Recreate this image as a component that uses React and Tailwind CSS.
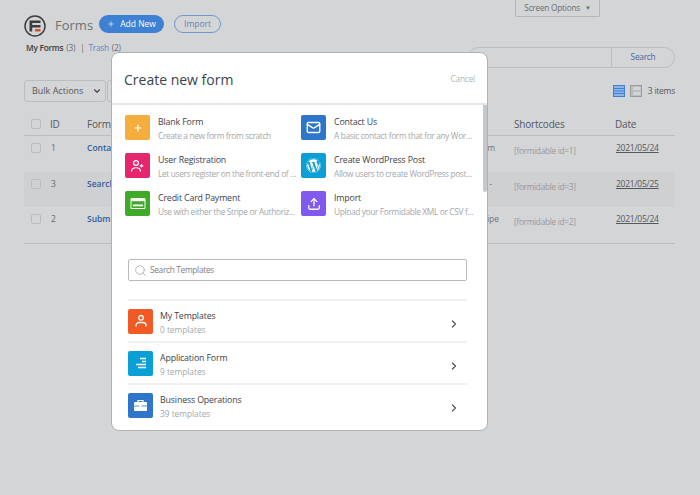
import React from "react";
import { Plus, Mail, Upload, ChevronRight, Search, ChevronDown } from "lucide-react";
import { FaWordpress } from "react-icons/fa";

const font = { fontFamily: '"Open Sans", "Noto Sans", sans-serif' };

function Tile({ bg, children }) {
  return <div className={`w-[25px] h-[25px] ${bg} rounded-[2px] flex items-center justify-center shrink-0 text-white`}>{children}</div>;
}

function Card({ bg, icon, title, desc }) {
  return (
    <div className="flex gap-2 items-start h-[25px] min-w-0">
      <Tile bg={bg}>{icon}</Tile>
      <div className="min-w-0 flex-1 pt-[1px]">
        <div className="text-[8.8px] tracking-[-0.15px] leading-[13px] text-[#3c434a] whitespace-nowrap">{title}</div>
        <div className="text-[8.3px] tracking-[-0.33px] leading-[13px] text-[#a4a7aa] truncate">{desc}</div>
      </div>
    </div>
  );
}

function Row({ bg, icon, title, sub }) {
  return (
    <div className="h-[42px] border-t-2 border-[#f0f0f1] flex items-center">
      <Tile bg={bg}>{icon}</Tile>
      <div className="ml-[7px] flex-1 pt-[4px]">
        <div className="text-[8.8px] tracking-[-0.15px] leading-[13px] text-[#3c434a]">{title}</div>
        <div className="text-[8.3px] leading-[13px] text-[#a4a7aa]">{sub}</div>
      </div>
      <ChevronRight size={12} strokeWidth={2.6} className="text-[#50575e] mr-[7px] mt-[5px]" />
    </div>
  );
}

function TableRow({ id, name, tail, tailPad, code, date, shaded }) {
  return (
    <div className={`h-[35.5px] flex text-[8.5px] ${shaded ? "bg-[#cfd0d2]" : ""}`}>
      <div className="w-[26px] pl-[7px] pt-[7px]"><div className="w-[10px] h-[10px] border border-[#bcbdbf] rounded-[2px]" /></div>
      <div className="w-[37px] pl-[1px] pt-[6px] text-[#686b6e]">{id}</div>
      <div className={`w-[427px] pt-[6px] ${tailPad} text-[#2f5d9e] font-semibold flex justify-between`}>
        <span>{name}</span><span className="font-normal text-[#6f7275]">{tail}</span>
      </div>
      <div className="w-[101px] pt-[9px] text-[8.3px] tracking-[-0.3px] text-[#97999c]">{code}</div>
      <div className="pt-[6px] pl-[1px] text-[8.5px] tracking-[-0.25px] text-[#55585c] underline">{date}</div>
    </div>
  );
}

export default function App() {
  return (
    <div style={font} className="relative w-[700px] h-[495px] overflow-hidden bg-[#d4d5d7]">
      <div className="pl-[24px] pr-[25px] h-full flex flex-col">
        <div className="flex justify-end pr-[75px]">
          <div className="w-[85px] h-[17px] border border-t-0 border-[#b5b6b8] rounded-b-[2px] text-[8.3px] tracking-[-0.25px] text-[#6b6e72] flex items-center justify-center gap-[5px]">
            Screen Options <span className="text-[6px]">▼</span>
          </div>
        </div>
        <div className="flex items-center h-[21px] -mt-[2px]">
          <svg width="22" height="22" viewBox="0 0 22 22" className="shrink-0">
            <circle cx="11" cy="11" r="10" fill="none" stroke="#3a3d42" strokeWidth="1.5" />
            <path d="M5.5 5.5h11v2.6H8.2v1.9h8.3v2.4H8.2v4.1H5.5z" fill="#3a3d42" />
            <rect x="11" y="14" width="5.5" height="2.5" fill="#d9502a" />
          </svg>
          <span className="ml-[9px] text-[13px] text-[#6d7074]">Forms</span>
          <div className="ml-[6px] -mt-[3px] w-[65px] h-[18px] rounded-full bg-[#3d80d4] text-white text-[8.5px] flex items-center justify-center gap-[5px]">
            <Plus size={8} strokeWidth={1.8} /> Add New
          </div>
          <div className="ml-[10px] -mt-[3px] w-[47px] h-[18px] rounded-full border border-[#6d98cf] text-[#6087b8] text-[8.5px] flex items-center justify-center">Import</div>
        </div>
        <div className="flex justify-between mt-[5px] h-[27px]">
          <div className="pl-[2px] text-[8.3px] tracking-[-0.25px] text-[#6b6e72] leading-[13px] whitespace-nowrap flex">
            <b className="text-[#3a3d42] font-semibold">My Forms</b>
            <span className="ml-[3px]">(3)</span>
            <span className="ml-[5px]">|</span>
            <span className="ml-[4px] text-[#5a85c0]">Trash</span>
            <span className="ml-[3px]">(2)</span>
          </div>
          <div className="w-[207px] h-[21px] mt-[6px] border border-[#bcbdbf] rounded-full flex justify-end">
            <div className="w-[63px] border-l border-[#bcbdbf] text-[8.3px] tracking-[-0.25px] text-[#46699b] flex items-center justify-center">Search</div>
          </div>
        </div>
        <div className="flex justify-between items-center mt-[12px] h-[22px]">
          <div className="flex gap-[1px]">
            <div className="w-[82px] h-[22px] border border-[#bcbdbf] rounded-[3px] text-[9px] text-[#55585c] flex items-center justify-between pl-[7px] pr-[3px]">
              Bulk Actions <ChevronDown size={10} strokeWidth={2.6} className="text-[#3c434a]" />
            </div>
            <div className="w-[20px] h-[22px] border border-[#bcbdbf] rounded-[3px]" />
          </div>
          <div className="flex items-center text-[8.5px] tracking-[-0.25px] text-[#55585c]">
            <svg width="12" height="12" viewBox="0 0 12 12" className="mr-[5px]">
              <rect x=".5" y=".5" width="11" height="11" fill="#8fb4e5" stroke="#3d80d4" />
              <path d="M0 3.5h12M0 6h12M0 8.5h12" stroke="#3d80d4" />
            </svg>
            <svg width="12" height="12" viewBox="0 0 12 12" className="mr-[6px]">
              <rect x=".5" y=".5" width="11" height="11" fill="#bcbdbf" stroke="#9a9b9e" />
              <rect x="3.5" y="2" width="7" height="3" fill="#d4d5d7" /><rect x="3.5" y="7" width="7" height="3" fill="#d4d5d7" />
            </svg>
            3 items
          </div>
        </div>
        <div className="flex mt-[15px] h-[19px] border-b border-[#bcbdbf] text-[10px] leading-[14px] tracking-[-0.2px] text-[#55585c] w-[651px]">
          <div className="w-[26px] pl-[7px] pt-[2px]"><div className="w-[10px] h-[10px] border border-[#bcbdbf] rounded-[2px]" /></div>
          <div className="w-[37px]">ID</div>
          <div className="w-[427px]">Form</div>
          <div className="w-[101px]">Shortcodes</div>
          <div>Date</div>
        </div>
        <div className="border-b border-[#bcbdbf] w-[651px]">
          <TableRow id="1" name="Contact Us" tail="rm" tailPad="pr-[19px]" code="[formidable id=1]" date="2021/05/24" />
          <TableRow id="3" name="Search" tail="-" tailPad="pr-[22px]" code="[formidable id=3]" date="2021/05/25" shaded />
          <TableRow id="2" name="Submit" tail="ipe" tailPad="pr-[15px]" code="[formidable id=2]" date="2021/05/24" />
        </div>
      </div>

      <div className="absolute left-[111px] top-[52px] w-[377px] h-[379px] bg-white rounded-[8px] border border-[#b0b1b3] overflow-hidden flex flex-col">
        <div className="h-[52px] shrink-0 border-b-2 border-[#e6e6e7] flex items-center justify-between pl-[12px] pr-[12px] pt-[2px]">
          <span className="text-[14px] text-[#3c434a]">Create new form</span>
          <span className="text-[8.3px] tracking-[-0.2px] text-[#b4b6b8]">Cancel</span>
        </div>
        <div className="relative h-[154px] shrink-0 pl-[13px] pt-[10px]">
          <div className="grid grid-cols-[172px_174px] gap-x-[4px] gap-y-[13px]">
            <Card bg="bg-[#f5ae3d]" icon={<Plus size={10} strokeWidth={2.6} />} title="Blank Form" desc="Create a new form from scratch" />
            <Card bg="bg-[#2f75c9]" icon={<Mail size={15} strokeWidth={2.2} />} title="Contact Us" desc="A basic contact form that for any WordPress site" />
            <Card bg="bg-[#e5266f]" icon={
              <svg width="15" height="14" viewBox="0 0 15 14" fill="none" stroke="#fff" strokeWidth="1.2"><circle cx="6" cy="4" r="2.4" /><path d="M1.5 12.5c0-5 9-5 9 0M11.5 5v3.6M9.7 6.8h3.6" /></svg>
            } title="User Registration" desc="Let users register on the front-end of your site" />
            <Card bg="bg-[#0aa0d5]" icon={<FaWordpress size={15} />} title="Create WordPress Post" desc="Allow users to create WordPress posts from the form" />
            <Card bg="bg-[#3dab27]" icon={
              <svg width="16" height="13" viewBox="0 0 16 13"><rect x=".5" y="1" width="15" height="11" rx="1.2" fill="#fff" /><rect x="1.5" y="4.2" width="13" height="6.8" fill="#3dab27" /><rect x="3" y="7.5" width="10" height="1.8" fill="#fff" /></svg>
            } title="Credit Card Payment" desc="Use with either the Stripe or Authorize.net add-on" />
            <Card bg="bg-[#8159ef]" icon={<Upload size={14} strokeWidth={2.2} />} title="Import" desc="Upload your Formidable XML or CSV file to import" />
          </div>
          <div className="absolute right-0 top-0 w-[4px] h-[87px] bg-[#c6c7c9] rounded-b-[2px]" />
        </div>
        <div className="pl-[16px] pr-[20px] flex flex-col flex-1">
          <div className="h-[22px] border border-[#b9babc] rounded-[2px] flex items-center pl-[5px] text-[8.3px] tracking-[-0.3px] text-[#7d8084]">
            <Search size={13} strokeWidth={1.4} className="text-[#a4a7aa] mr-[3px]" />
            Search Templates
          </div>
          <div className="mt-[18px]">
            <Row bg="bg-[#f15a24]" icon={
              <svg width="14" height="14" viewBox="0 0 14 14" fill="none" stroke="#fff" strokeWidth="1.3"><circle cx="7" cy="3.8" r="2.3" /><path d="M2 12.5v-1a3 3 0 0 1 3-3h4a3 3 0 0 1 3 3v1" /></svg>
            } title="My Templates" sub="0 templates" />
            <Row bg="bg-[#0aa0d5]" icon={
              <svg width="14" height="13" viewBox="0 0 14 13" stroke="#fff" strokeWidth="1.3"><path d="M6 1.5h6M8 4.5h4M2 7.5h10M4 10.5h8" /></svg>
            } title="Application Form" sub="9 templates" />
            <Row bg="bg-[#2f75c9]" icon={
              <svg width="15" height="13" viewBox="0 0 15 13"><path d="M5 3V1.5h5V3" fill="none" stroke="#fff" strokeWidth="1.2" /><rect x="1" y="3" width="13" height="9" rx="1" fill="#fff" /><path d="M1 7h13" stroke="#2f75c9" strokeWidth=".8" /><rect x="6.5" y="6" width="2" height="2" fill="#fff" /></svg>
            } title="Business Operations" sub="39 templates" />
          </div>
        </div>
      </div>
    </div>
  );
}
